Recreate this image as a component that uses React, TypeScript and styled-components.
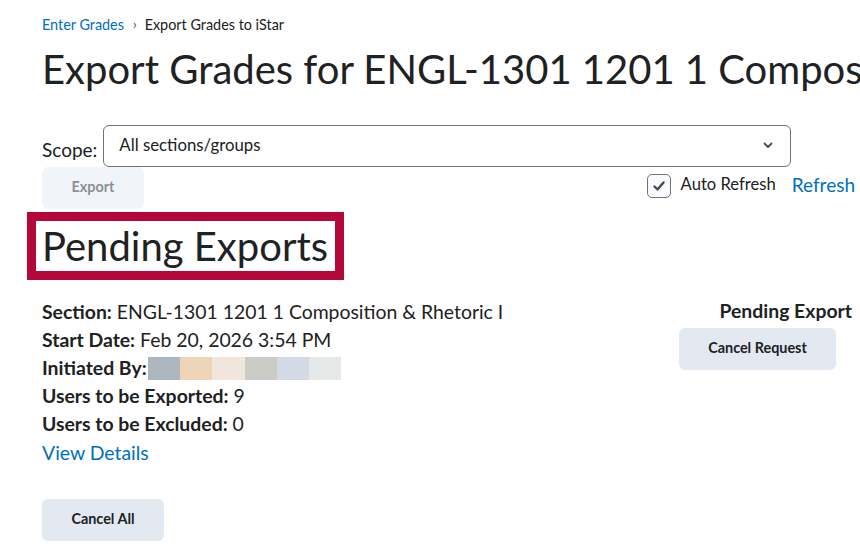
import React from 'react';
import styled, { createGlobalStyle } from 'styled-components';

const GlobalStyle = createGlobalStyle`
  html, body {
    margin: 0;
    padding: 0;
    background: #fff;
  }
  body {
    font-family: Lato, 'Noto Sans', sans-serif;
    color: #202122;
  }
`;

const blurColors = ['#adb7bf', '#efd5b8', '#f0e6dc', '#cbccc6', '#d3dae5', '#e5e8e9'];

const details = [
  { label: 'Section:', value: 'ENGL-1301 1201 1 Composition & Rhetoric I' },
  { label: 'Start Date:', value: 'Feb 20, 2026 3:54 PM' },
];

const ChevronDown = () => (
  <svg width="14" height="14" viewBox="0 0 14 14" fill="none">
    <path d="M3.5 5.5 L7 9 L10.5 5.5" stroke="#494c4e" strokeWidth="1.8" strokeLinecap="round" strokeLinejoin="round" />
  </svg>
);

const CheckMark = () => (
  <svg width="14" height="14" viewBox="0 0 14 14" fill="none">
    <path d="M2.5 7.5 L5.5 10.5 L11.5 3.5" stroke="#494c4e" strokeWidth="2.4" strokeLinecap="round" strokeLinejoin="round" />
  </svg>
);

const App = () => {
  return (
    <>
      <GlobalStyle />
      <Page>
        <Breadcrumb>
          <Crumb>Enter Grades</Crumb>
          <Separator>›</Separator>
          <span>Export Grades to iStar</span>
        </Breadcrumb>
        <Title>Export Grades for ENGL-1301 1201 1 Composition &amp; Rhetoric I</Title>

        <ScopeRow>
          <ScopeLabel>Scope:</ScopeLabel>
          <Select>
            <span>All sections/groups</span>
            <ChevronDown />
          </Select>
        </ScopeRow>

        <ActionRow>
          <Button disabled>Export</Button>
          <RefreshGroup>
            <Checkbox>
              <CheckMark />
            </Checkbox>
            <CheckLabel>Auto Refresh</CheckLabel>
            <RefreshLink>Refresh</RefreshLink>
          </RefreshGroup>
        </ActionRow>

        <Highlight>
          <Heading>Pending Exports</Heading>
        </Highlight>

        <ExportItem>
          <DetailList>
            {details.map((d) => (
              <Line key={d.label}>
                <b>{d.label}</b>
                {` ${d.value}`}
              </Line>
            ))}
            <Line>
              <b>Initiated By:</b>
              <Redacted>
                {blurColors.map((c) => (
                  <Swatch key={c} $color={c} />
                ))}
              </Redacted>
            </Line>
            <Line>
              <b>Users to be Exported:</b>
              {' 9'}
            </Line>
            <Line>
              <b>Users to be Excluded:</b>
              {' 0'}
            </Line>
            <Line>
              <Link>View Details</Link>
            </Line>
          </DetailList>
          <StatusColumn>
            <Status>Pending Export</Status>
            <Button $width={157}>Cancel Request</Button>
          </StatusColumn>
        </ExportItem>

        <Footer>
          <Button $width={122}>Cancel All</Button>
        </Footer>
      </Page>
    </>
  );
};

export default App;

const Page = styled.div`
  width: 860px;
  height: 559px;
  overflow: hidden;
  padding-left: 42px;
  box-sizing: border-box;
`;

const Breadcrumb = styled.nav`
  display: flex;
  align-items: center;
  height: 22px;
  margin-top: 13px;
  font-size: 14.4px;
  color: #202122;
`;

const Crumb = styled.a`
  color: #006fbf;
  cursor: pointer;
`;

const Separator = styled.span`
  margin: 0 8px 0 9px;
  font-size: 13px;
  color: #494c4e;
`;

const Title = styled.h1`
  margin: 10px 0 0;
  font-size: 40px;
  font-weight: 400;
  line-height: 48px;
  white-space: nowrap;
`;

const ScopeRow = styled.div`
  display: flex;
  align-items: center;
  margin-top: 32px;
  gap: 6px;
`;

const ScopeLabel = styled.label`
  font-size: 19px;
  padding-top: 6px;
`;

const Select = styled.div`
  box-sizing: border-box;
  width: 688px;
  height: 42px;
  display: flex;
  align-items: center;
  justify-content: space-between;
  padding: 0 15px 3px 15px;
  border: 1px solid #6e7477;
  border-radius: 6px;
  font-size: 16.8px;
`;

const ActionRow = styled.div`
  display: flex;
  justify-content: space-between;
  align-items: flex-start;
  width: 813px;
`;

const Button = styled.button<{ $width?: number }>`
  box-sizing: border-box;
  width: ${(p) => p.$width ?? 102}px;
  height: 42px;
  border: none;
  border-radius: 6px;
  background: ${(p) => (p.disabled ? '#f1f4f9' : '#e3e9f1')};
  color: ${(p) => (p.disabled ? '#8c9094' : '#202122')};
  font-family: Lato, 'Noto Sans', sans-serif;
  font-size: 14.4px;
  font-weight: 700;
  padding: 0 0 3px;
`;

const RefreshGroup = styled.div`
  display: flex;
  align-items: center;
  margin-top: 6px;
`;

const Checkbox = styled.span`
  box-sizing: border-box;
  width: 24px;
  height: 24px;
  display: inline-flex;
  align-items: center;
  justify-content: center;
  border: 1px solid #6e7477;
  border-radius: 5px;
  background: #f9fbff;
`;

const CheckLabel = styled.span`
  margin-left: 10px;
  font-size: 16.6px;
  padding-bottom: 5px;
`;

const RefreshLink = styled.a`
  margin-left: 16px;
  font-size: 19px;
  color: #006fbf;
  padding-bottom: 3px;
`;

const Highlight = styled.div`
  display: inline-block;
  margin: 3px 0 0 -15px;
  padding: 0 7px 0 6px;
  border: 9px solid #b5083a;
`;

const Heading = styled.h2`
  margin: 0;
  font-size: 40px;
  font-weight: 400;
  line-height: 50px;
`;

const ExportItem = styled.div`
  display: flex;
  justify-content: space-between;
  width: 810px;
  margin-top: 17px;
`;

const DetailList = styled.div`
  display: flex;
  flex-direction: column;
`;

const Line = styled.div`
  display: flex;
  align-items: center;
  height: 28.2px;
  font-size: 19.4px;
  white-space: pre;

  b {
    font-weight: 700;
  }
`;

const Redacted = styled.span`
  display: flex;
  margin-left: 1px;
  margin-top: 3px;
`;

const Swatch = styled.span<{ $color: string }>`
  width: 32.3px;
  height: 23px;
  background: ${(p) => p.$color};
`;

const Link = styled.a`
  color: #006fbf;
`;

const StatusColumn = styled.div`
  display: flex;
  flex-direction: column;
  align-items: flex-end;
  gap: 3px;

  button {
    margin-right: 16px;
  }
`;

const Status = styled.div`
  font-size: 19.4px;
  font-weight: 700;
  line-height: 28px;
`;

const Footer = styled.div`
  margin-top: 33px;
`;
